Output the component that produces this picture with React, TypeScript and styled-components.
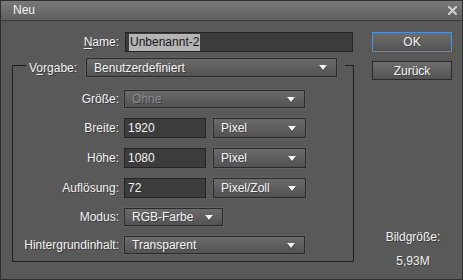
import React, { FC } from 'react';
import styled, { createGlobalStyle } from 'styled-components';

const GlobalStyle = createGlobalStyle`
  html, body {
    margin: 0;
    padding: 0;
    background: #595959;
  }
  * {
    box-sizing: border-box;
  }
`;

const Window = styled.div`
  width: 463px;
  height: 280px;
  display: flex;
  flex-direction: column;
  background: #595959;
  border: 1px solid #2f2f2f;
  font-family: 'Liberation Sans', Arial, sans-serif;
  font-size: 12px;
  color: #f2f2f2;
`;

const TitleBar = styled.div`
  height: 20px;
  flex: none;
  display: flex;
  align-items: center;
  justify-content: space-between;
  padding: 0 5px 1px 12px;
  background: linear-gradient(#7a7a7a, #5e5e5e);
  border-bottom: 1px solid #3a3a3a;
  color: #f4f4f4;
`;

const CloseIcon = styled.svg`
  display: block;
  width: 9px;
  height: 9px;
`;

const Body = styled.div`
  flex: 1;
  display: flex;
  padding: 11px 10px 0 11px;
`;

const LeftColumn = styled.div`
  width: 342px;
  display: flex;
  flex-direction: column;
`;

const NameRow = styled.div`
  display: grid;
  grid-template-columns: 107px 1fr;
  column-gap: 6px;
  align-items: center;
  padding-right: 1px;
`;

const Label = styled.span`
  justify-self: end;
  text-align: right;
  white-space: nowrap;
  text-shadow: 1px 1px 0 rgba(0, 0, 0, 0.35);
  u {
    text-decoration: underline;
    text-underline-offset: 2px;
  }
`;

const TextField = styled.div<{ $width?: number }>`
  height: 20px;
  width: ${(p) => (p.$width ? `${p.$width}px` : 'auto')};
  display: flex;
  align-items: center;
  padding-left: 3px;
  background: #3c3c3c;
  border: 1px solid #242424;
  color: #f4f4f4;
`;

const Selected = styled.span`
  background: #b4b4b4;
  color: #161616;
  padding: 1px 1px 2px;
`;

const Group = styled.fieldset`
  margin: 1px 0 0;
  padding: 0;
  border: 1px solid #1e1e1e;
  min-width: 0;
`;

const Legend = styled.legend`
  margin-left: 13px;
  padding: 5px 8px 0 3px;
  display: flex;
  align-items: center;
  gap: 9px;
`;

const Rows = styled.div`
  display: grid;
  grid-template-columns: 106px auto;
  column-gap: 5px;
  row-gap: 10px;
  align-items: center;
  justify-items: start;
  padding: 13px 0 7px;
`;

const Pair = styled.div`
  display: flex;
  gap: 7px;
`;

const Select = styled.div<{ $width: number; $height?: number; $disabled?: boolean }>`
  width: ${(p) => p.$width}px;
  height: ${(p) => p.$height ?? 19}px;
  display: flex;
  align-items: center;
  justify-content: space-between;
  padding: 0 9px 0 7px;
  background: linear-gradient(#6b6b6b, #525252);
  border: 1px solid #2a2a2a;
  box-shadow: 0 0 0 1px rgba(255, 255, 255, 0.05);
  color: ${(p) => (p.$disabled ? '#8e8e8e' : '#f4f4f4')};
  text-shadow: ${(p) =>
    p.$disabled ? '1px 1px 0 rgba(0,0,0,0.35)' : '1px 1px 0 rgba(0,0,0,0.3)'};
  white-space: nowrap;
`;

const Arrow = styled.span`
  width: 0;
  height: 0;
  border-left: 4px solid transparent;
  border-right: 4px solid transparent;
  border-top: 5px solid #f4f4f4;
  filter: drop-shadow(0 1px 0 rgba(0, 0, 0, 0.4));
`;

const RightColumn = styled.div`
  width: 80px;
  margin-left: 18px;
  display: flex;
  flex-direction: column;
  align-items: center;
  padding-bottom: 11px;
`;

const Button = styled.div<{ $focused?: boolean; $height: number }>`
  width: 80px;
  height: ${(p) => p.$height}px;
  display: flex;
  align-items: center;
  justify-content: center;
  background: linear-gradient(#6d6d6d, #545454);
  border: 1px solid ${(p) => (p.$focused ? '#4a90dc' : '#2a2a2a')};
  color: #f6f6f6;
  text-shadow: 1px 1px 0 rgba(0, 0, 0, 0.3);
  & + & {
    margin-top: 9px;
  }
`;

const SizeInfo = styled.div`
  margin-top: auto;
  display: flex;
  flex-direction: column;
  align-items: center;
  gap: 10px;
  line-height: 14px;
  padding-left: 2px;
  text-shadow: 1px 1px 0 rgba(0, 0, 0, 0.35);
`;

const Dropdown: FC<{ width: number; height?: number; value: string; disabled?: boolean }> = ({
  width,
  height,
  value,
  disabled,
}) => (
  <Select $width={width} $height={height} $disabled={disabled}>
    <span>{value}</span>
    <Arrow />
  </Select>
);

export default function App() {
  return (
    <>
      <GlobalStyle />
      <Window>
        <TitleBar>
          <span>Neu</span>
          <CloseIcon viewBox="0 0 9 9">
            <path d="M1 1 L8 8 M8 1 L1 8" stroke="#cfcfcf" strokeWidth="2.2" strokeLinecap="square" />
          </CloseIcon>
        </TitleBar>
        <Body>
          <LeftColumn>
            <NameRow>
              <Label>
                <u>N</u>ame:
              </Label>
              <TextField>
                <Selected>Unbenannt-2</Selected>
              </TextField>
            </NameRow>
            <Group>
              <Legend>
                <Label>
                  V<u>o</u>rgabe:
                </Label>
                <Dropdown width={251} value="Benutzerdefiniert" />
              </Legend>
              <Rows>
                <Label>Größe:</Label>
                <Dropdown width={181} height={18} value="Ohne" disabled />
                <Label>Breite:</Label>
                <Pair>
                  <TextField $width={82}>1920</TextField>
                  <Dropdown width={93} height={20} value="Pixel" />
                </Pair>
                <Label>Höhe:</Label>
                <Pair>
                  <TextField $width={82}>1080</TextField>
                  <Dropdown width={93} height={20} value="Pixel" />
                </Pair>
                <Label>Auflösung:</Label>
                <Pair>
                  <TextField $width={82}>72</TextField>
                  <Dropdown width={93} height={20} value="Pixel/Zoll" />
                </Pair>
                <Label>Modus:</Label>
                <Dropdown width={99} height={18} value="RGB-Farbe" />
                <Label>Hintergrundinhalt:</Label>
                <Dropdown width={181} height={18} value="Transparent" />
              </Rows>
            </Group>
          </LeftColumn>
          <RightColumn>
            <Button $focused $height={20}>
              OK
            </Button>
            <Button $height={19}>Zurück</Button>
            <SizeInfo>
              <span>Bildgröße:</span>
              <span>5,93M</span>
            </SizeInfo>
          </RightColumn>
        </Body>
      </Window>
    </>
  );
}
